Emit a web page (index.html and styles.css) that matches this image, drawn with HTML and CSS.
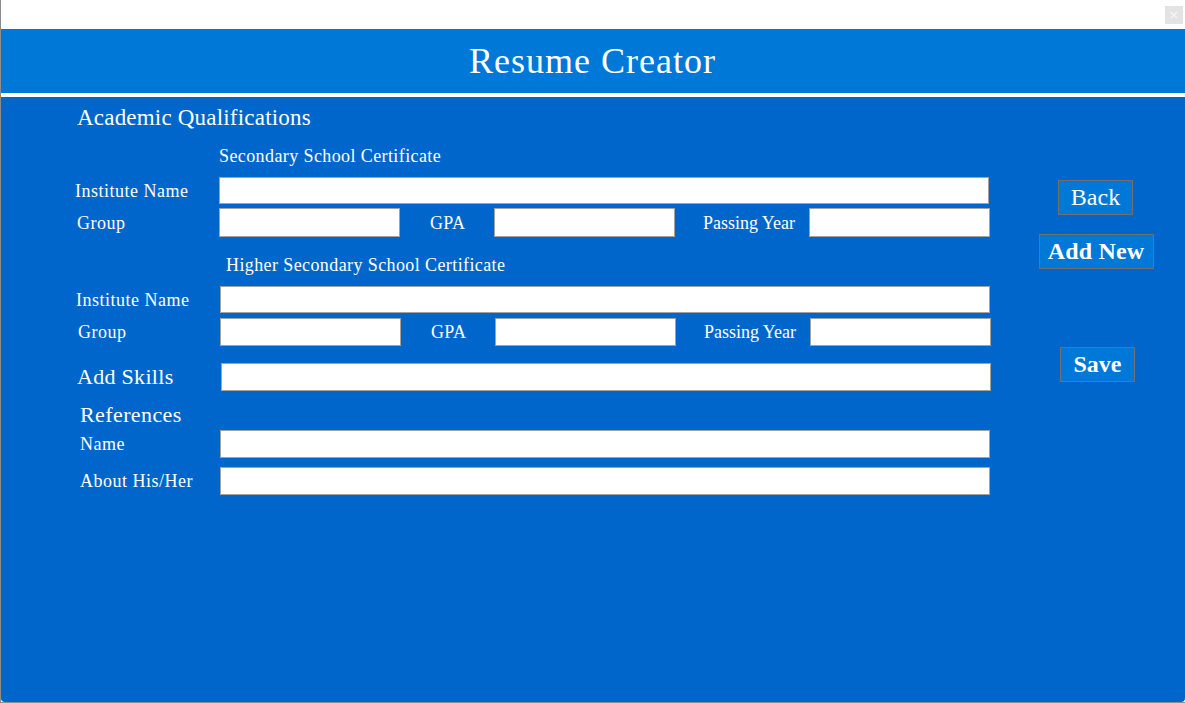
FILE: index.html
```html
<!DOCTYPE html>
<html lang="en">
<head>
<meta charset="utf-8">
<title>Resume Creator</title>
<link rel="stylesheet" href="styles.css">
</head>
<body>
<div class="window">
  <div class="titlebar"><span class="close">&#215;</span></div>
  <header class="header"><h1 class="title">Resume Creator</h1></header>
  <main class="main">
    <section class="form">
      <h2 class="section-title">Academic Qualifications</h2>
      <div class="sub sub-ssc">Secondary School Certificate</div>
      <div class="row row-first">
        <label class="lbl">Institute Name</label>
        <input class="field wide" type="text">
      </div>
      <div class="row row-group">
        <label class="lbl lbl-group">Group</label>
        <input class="field third" type="text">
        <span class="mid mid-gpa">GPA</span>
        <input class="field third" type="text">
        <span class="mid mid-year">Passing Year</span>
        <input class="field third" type="text">
      </div>

      <div class="sub sub-hsc">Higher Secondary School Certificate</div>
      <div class="row row-first row-shift">
        <label class="lbl">Institute Name</label>
        <input class="field wide" type="text">
      </div>
      <div class="row row-group row-group2 row-shift">
        <label class="lbl lbl-group">Group</label>
        <input class="field third" type="text">
        <span class="mid mid-gpa">GPA</span>
        <input class="field third" type="text">
        <span class="mid mid-year">Passing Year</span>
        <input class="field third" type="text">
      </div>

      <div class="row row-skills">
        <label class="lbl lbl-big">Add Skills</label>
        <input class="field wide" type="text">
      </div>

      <h2 class="section-title refs">References</h2>
      <div class="row row-name">
        <label class="lbl lbl-ref">Name</label>
        <input class="field wide" type="text">
      </div>
      <div class="row row-about">
        <label class="lbl lbl-ref">About His/Her</label>
        <input class="field wide" type="text">
      </div>
    </section>

    <aside class="actions">
      <button class="btn btn-back" type="button">Back</button>
      <button class="btn btn-bold btn-add" type="button">Add New</button>
      <button class="btn btn-bold btn-save" type="button">Save</button>
    </aside>
  </main>
</div>
</body>
</html>
```

FILE: styles.css
```css
* { box-sizing: border-box; }

html, body {
  margin: 0;
  padding: 0;
  background: #ffffff;
}

body {
  font-family: "Liberation Serif", "Times New Roman", serif;
  color: #ffffff;
}

.window {
  width: 1185px;
  height: 703px;
  border-left: 1px solid #8c8c8c;
  border-bottom: 1px solid #8c8c8c;
  display: flex;
  flex-direction: column;
  overflow: hidden;
}

.titlebar {
  height: 29px;
  background: #ffffff;
  display: flex;
  justify-content: flex-end;
  align-items: flex-start;
  padding: 6px 2px 0 0;
}

.close {
  width: 18px;
  height: 18px;
  background: #e3e3e3;
  color: #f7f7f7;
  font-family: "DejaVu Sans", sans-serif;
  font-size: 13px;
  line-height: 18px;
  text-align: center;
}

.header {
  height: 68px;
  background: #0078d7;
  border-bottom: 4px solid #ffffff;
}

.title {
  margin: 0;
  height: 64px;
  line-height: 65px;
  text-align: center;
  font-size: 36px;
  font-weight: normal;
  letter-spacing: 1px;
  padding-right: 1px;
}

.main {
  flex: 1;
  background: #0066cc;
  display: flex;
  border-bottom-left-radius: 4px;
  border-bottom-right-radius: 4px;
}

.form {
  flex: 0 0 1006px;
  padding: 9px 0 0 74px;
  display: flex;
  flex-direction: column;
  align-items: flex-start;
}

.section-title {
  margin: 0 0 0 2px;
  font-size: 23px;
  line-height: 24px;
  font-weight: normal;
  letter-spacing: 0.2px;
}

.sub {
  font-size: 18px;
  line-height: 20px;
  letter-spacing: 0.4px;
}

.sub-ssc { margin: 16px 0 0 144px; }
.sub-hsc { margin: 18px 0 0 151px; }

.row {
  display: flex;
  align-items: center;
  height: 28px;
}

.row-first { margin-top: 11px; height: 27px; }
.row-group { margin-top: 4px; height: 29px; }
.row-group2 { margin-top: 5px; height: 28px; }
.row-shift { padding-left: 1px; }
.row-skills { margin-top: 17px; }
.row-name { margin-top: 3px; }
.row-about { margin-top: 9px; }

.lbl {
  width: 144px;
  flex: 0 0 144px;
  font-size: 18px;
  line-height: 20px;
  letter-spacing: 0.5px;
}

.lbl-group { padding-left: 2px; }

.lbl-big {
  font-size: 22px;
  line-height: 24px;
  padding-left: 2px;
  letter-spacing: 0.3px;
  flex-basis: 146px;
  width: 146px;
}

.lbl-ref {
  padding-left: 5px;
  flex-basis: 145px;
  width: 145px;
}

.refs {
  margin: 12px 0 0 5px;
  font-size: 22px;
  letter-spacing: 0.4px;
}

.field {
  height: 100%;
  margin: 0;
  padding: 0 4px;
  background: #ffffff;
  border: 1px solid #a2a2a2;
  border-radius: 0;
  outline: none;
  font-family: inherit;
  font-size: 16px;
}

.wide { width: 770px; }
.third { width: 181px; }

.mid {
  font-size: 18px;
  line-height: 20px;
  letter-spacing: 0.3px;
  white-space: nowrap;
}

.mid-gpa { width: 94px; padding-left: 30px; }
.mid-year { width: 134px; padding-left: 28px; letter-spacing: 0; }

.actions {
  flex: 1;
  display: flex;
  flex-direction: column;
  align-items: center;
  padding-top: 83px;
}

.btn {
  height: 35px;
  padding: 0;
  margin: 0;
  background: #0078d7;
  border: 1px solid #707070;
  color: #ffffff;
  font-family: "Liberation Serif", "Times New Roman", serif;
  font-size: 24px;
  line-height: 31px;
  cursor: pointer;
}

.btn-bold { font-weight: bold; }

.btn-back { width: 75px; margin-left: -1px; }
.btn-add { width: 115px; margin-top: 19px; letter-spacing: 0.2px; }
.btn-save { width: 75px; margin-top: 78px; margin-left: 3px; }
```
